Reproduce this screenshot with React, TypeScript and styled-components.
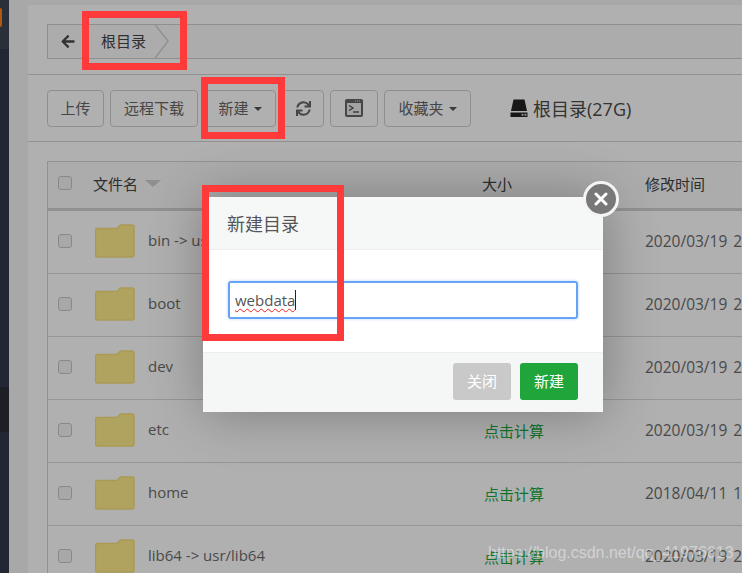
import styled, { createGlobalStyle } from "styled-components";
import { FaArrowLeft, FaSync } from "react-icons/fa";

const GlobalStyle = createGlobalStyle`
  html, body {
    margin: 0;
    height: 100%;
    overflow: hidden;
    background: #f3f3f3;
  }
  body {
    font-family: "Open Sans", "Noto Sans CJK SC", sans-serif;
    font-size: 15px;
  }
`;

const Shell = styled.div`
  position: relative;
  display: flex;
  width: 742px;
  height: 573px;
  overflow: hidden;
`;

const Sidebar = styled.div`
  display: flex;
  flex-direction: column;
  width: 9px;
  flex-shrink: 0;
  background: #33394a;
`;

const SidebarTop = styled.div`
  height: 49px;
  padding-top: 8px;
  box-sizing: border-box;
  background: #3d4553;
`;

const Logo = styled.div`
  width: 2px;
  height: 19px;
  background: #ff8217;
  border-radius: 0 3px 3px 0;
`;

const SidebarActive = styled.div`
  height: 45px;
  margin-top: 338px;
  background: #2a2e36;
`;

const Gutter = styled.div`
  width: 19px;
  flex-shrink: 0;
`;

const Panel = styled.div`
  flex: 1;
  min-width: 0;
  margin-top: 5px;
  background: #fff;
  overflow: hidden;
`;

const CrumbSection = styled.div`
  padding: 19px 0 15px 19px;
  border-bottom: 1px solid #d3d3d3;
`;

const CrumbBar = styled.div`
  display: flex;
  align-items: center;
  height: 35px;
  box-sizing: border-box;
  border: 1px solid #d0d0d0;
  border-right: 0;
  background: #fafafa;
`;

const BackArrow = styled(FaArrowLeft)`
  width: 16px;
  height: 15px;
  margin-left: 12px;
  color: #484848;
`;

const Crumb = styled.span`
  margin-left: 25px;
  padding-bottom: 3px;
  font-size: 15px;
  color: #444;
`;

const CrumbTip = styled.svg`
  width: 15px;
  height: 35px;
  margin-left: 8px;
  fill: none;
  stroke: #cfcfd6;
  stroke-width: 1.4;
`;

const Toolbar = styled.div`
  display: flex;
  align-items: center;
  gap: 6px;
  padding: 15px 0 14px 19px;
  border-bottom: 1px solid #d3d3d3;
`;

const ToolButton = styled.div<{ $width: number }>`
  display: flex;
  align-items: center;
  justify-content: center;
  width: ${(p) => p.$width}px;
  height: 37px;
  box-sizing: border-box;
  padding-bottom: 2px;
  border: 1px solid #d0d0d0;
  border-radius: 4px;
  background: #fff;
  color: #666;
  font-size: 15px;
  white-space: nowrap;
`;

const Caret = styled.span`
  width: 0;
  height: 0;
  margin: 2px 0 0 5px;
  border-left: 4.5px solid transparent;
  border-right: 4.5px solid transparent;
  border-top: 4.5px solid #555;
`;

const SyncIcon = styled(FaSync)`
  width: 15px;
  height: 15px;
  margin-top: 2px;
  color: #666;
`;

const ToolIcon = styled.svg`
  display: block;
  width: 18px;
  height: 18px;
`;

const DriveLabel = styled.div`
  display: flex;
  align-items: center;
  gap: 5px;
  margin: 0 0 1px 33px;
  font-size: 18px;
  color: #4a4a4a;
  white-space: nowrap;
`;

const FileTable = styled.div`
  width: 760px;
  margin: 19px 0 0 19px;
  border: 1px solid #d3d3d3;
  border-right: 0;
  box-sizing: border-box;
  border-bottom: 0;
`;

const Row = styled.div<{ $head?: boolean }>`
  display: grid;
  grid-template-columns: 45px 389px 163px 1fr;
  align-items: center;
  box-sizing: border-box;
  height: ${(p) => (p.$head ? "49px" : "63px")};
  padding-bottom: ${(p) => (p.$head ? "4px" : "2px")};
  background: ${(p) => (p.$head ? "#f9f9f9" : "#fff")};
  border-bottom: ${(p) => (p.$head ? "3px solid #d3d3d3" : "1px solid #d9d9d9")};
  color: ${(p) => (p.$head ? "#444" : "#6c6c6c")};
  white-space: nowrap;
`;

const CheckBox = styled.span`
  display: block;
  width: 14px;
  height: 14px;
  margin-left: 10px;
  box-sizing: border-box;
  border: 1.5px solid #c6c6c6;
  border-radius: 3px;
  background: #f4f4f4;
`;

const HeadName = styled.div`
  display: flex;
  align-items: center;
  gap: 7px;
`;

const SortArrow = styled.span`
  width: 0;
  height: 0;
  border-left: 8px solid transparent;
  border-right: 8px solid transparent;
  border-top: 7px solid #cfcfcf;
`;

const NameCell = styled.div`
  display: flex;
  align-items: center;
  gap: 13px;
  padding-left: 2px;
  margin-top: -1px;
  font-size: 15px;
`;

const FileName = styled.span`
  padding-bottom: 2px;
`;

const FolderIcon = styled.svg`
  display: block;
  flex-shrink: 0;
  width: 40px;
  height: 34px;
  fill: #ffec8c;
  stroke: #f6e07a;
  stroke-width: 1.5;
`;

const SizeLink = styled.div`
  padding-left: 2px;
  color: #1aa83f;
`;

const TimeCell = styled.div`
  font-size: 15.5px;
  word-spacing: 2px;
`;

const Overlay = styled.div`
  position: absolute;
  inset: 0;
  background: rgba(0, 0, 0, 0.31);
`;

const Modal = styled.div`
  position: absolute;
  left: 203px;
  top: 197px;
  width: 400px;
  background: #fff;
  box-shadow: 1px 1px 50px rgba(0, 0, 0, 0.3);
`;

const ModalHeader = styled.div`
  height: 53px;
  box-sizing: border-box;
  padding: 14px 24px 0;
  background: #f6f7f7;
  border-bottom: 1px solid #eee;
  font-size: 18px;
  line-height: 26px;
  color: #555;
`;

const ModalBody = styled.div`
  padding: 31px 25px 33px;
`;

const TextBox = styled.div`
  display: flex;
  align-items: center;
  height: 38px;
  box-sizing: border-box;
  padding: 0 5px;
  border: 2px solid #66a3f5;
  border-radius: 3px;
  box-shadow: 0 0 3px rgba(102, 163, 245, 0.5);
  font-size: 15px;
  color: #555;
`;

const Typed = styled.span`
  text-decoration: underline wavy #ee2222 1px;
  text-underline-offset: 2px;
`;

const TextCaret = styled.span`
  width: 1px;
  height: 20px;
  background: #222;
`;

const ModalFooter = styled.div`
  display: flex;
  justify-content: flex-end;
  gap: 9px;
  height: 60px;
  box-sizing: border-box;
  padding: 10px 25px 0;
  background: #f5f7f7;
  border-top: 1px solid #eee;
`;

const ModalButton = styled.div<{ $primary?: boolean }>`
  display: flex;
  align-items: center;
  justify-content: center;
  width: 58px;
  height: 37px;
  box-sizing: border-box;
  padding-bottom: 2px;
  border-radius: 3px;
  background: ${(p) => (p.$primary ? "#20a53a" : "#c9c9c9")};
  color: #fff;
  font-size: 15px;
`;

const CloseButton = styled.div`
  position: absolute;
  right: -16px;
  top: -16px;
  display: flex;
  align-items: center;
  justify-content: center;
  width: 36px;
  height: 36px;
  box-sizing: border-box;
  border: 3px solid #f4f4f4;
  border-radius: 50%;
  background: #787878;
`;

const CloseIcon = styled.svg`
  width: 14px;
  height: 14px;
  stroke: #fff;
  stroke-width: 3;
  stroke-linecap: round;
`;

const Annotation = styled.div<{ $x: number; $y: number; $w: number; $h: number }>`
  position: absolute;
  left: ${(p) => p.$x}px;
  top: ${(p) => p.$y}px;
  width: ${(p) => p.$w}px;
  height: ${(p) => p.$h}px;
  box-sizing: border-box;
  border: 7px solid #ff3a3a;
`;

const Watermark = styled.div`
  position: absolute;
  left: 488px;
  top: 544px;
  font-family: "Liberation Sans", sans-serif;
  font-size: 16px;
  color: rgba(255, 255, 255, 0.45);
  white-space: nowrap;
`;

const files = [
  { name: "bin -> usr/bin", size: "", time: "2020/03/19 21:08" },
  { name: "boot", size: "", time: "2020/03/19 21:08" },
  { name: "dev", size: "", time: "2020/03/19 21:08" },
  { name: "etc", size: "点击计算", time: "2020/03/19 21:08" },
  { name: "home", size: "点击计算", time: "2018/04/11 17:30" },
  { name: "lib64 -> usr/lib64", size: "点击计算", time: "2020/03/19 21:08" },
];

export default function App() {
  return (
    <Shell>
      <GlobalStyle />
      <Sidebar>
        <SidebarTop>
          <Logo />
        </SidebarTop>
        <SidebarActive />
      </Sidebar>
      <Gutter />
      <Panel>
        <CrumbSection>
          <CrumbBar>
            <BackArrow />
            <Crumb>根目录</Crumb>
            <CrumbTip viewBox="0 0 15 35">
              <path d="M0.5 0 L14 17 L0.5 35" />
            </CrumbTip>
          </CrumbBar>
        </CrumbSection>
        <Toolbar>
          <ToolButton $width={57}>上传</ToolButton>
          <ToolButton $width={88}>远程下载</ToolButton>
          <ToolButton $width={72}>
            新建
            <Caret />
          </ToolButton>
          <ToolButton $width={42}>
            <SyncIcon />
          </ToolButton>
          <ToolButton $width={48}>
            <ToolIcon viewBox="0 0 18 18">
              <rect x="0" y="0" width="18" height="18" rx="2" fill="#666" />
              <rect x="2" y="4" width="14" height="12" fill="#ededed" />
              <path d="M12 2 H13 M14 2 H15 M10 2 H11" stroke="#ddd" strokeWidth="1" />
              <path d="M4 6.5 L8 9 L4 11.5" fill="none" stroke="#555" strokeWidth="1.4" />
              <path d="M8 13 H14" stroke="#555" strokeWidth="1.4" />
            </ToolIcon>
          </ToolButton>
          <ToolButton $width={87}>
            收藏夹
            <Caret />
          </ToolButton>
          <DriveLabel>
            <ToolIcon viewBox="0 0 18 18">
              <path d="M3.5 0.5 H14.5 L17 12 H1 Z" fill="#222" />
              <path d="M0.5 13.5 H17.5 V18 H0.5 Z" fill="#222" />
              <rect x="11.5" y="14.8" width="2" height="2" fill="#ccc" />
              <rect x="14.5" y="14.8" width="2" height="2" fill="#ccc" />
            </ToolIcon>
            根目录(27G)
          </DriveLabel>
        </Toolbar>
        <FileTable>
          <Row $head>
            <CheckBox />
            <HeadName>
              文件名
              <SortArrow />
            </HeadName>
            <div>大小</div>
            <div>修改时间</div>
          </Row>
          {files.map((file) => (
            <Row key={file.name}>
              <CheckBox />
              <NameCell>
                <FolderIcon viewBox="0 0 40 34">
                  <path d="M2.5 4.5 H22 L25.5 1 H37 A2 2 0 0 1 39 3 V31 A2 2 0 0 1 37 33 H2.5 A2 2 0 0 1 0.5 31 V6.5 A2 2 0 0 1 2.5 4.5 Z" />
                </FolderIcon>
                <FileName>{file.name}</FileName>
              </NameCell>
              <SizeLink>{file.size}</SizeLink>
              <TimeCell>{file.time}</TimeCell>
            </Row>
          ))}
        </FileTable>
      </Panel>
      <Overlay />
      <Modal>
        <ModalHeader>新建目录</ModalHeader>
        <ModalBody>
          <TextBox>
            <Typed>webdata</Typed>
            <TextCaret />
          </TextBox>
        </ModalBody>
        <ModalFooter>
          <ModalButton>关闭</ModalButton>
          <ModalButton $primary>新建</ModalButton>
        </ModalFooter>
        <CloseButton>
          <CloseIcon viewBox="0 0 14 14">
            <path d="M2 2 L12 12 M12 2 L2 12" />
          </CloseIcon>
        </CloseButton>
      </Modal>
      <Annotation $x={82} $y={11} $w={105} $h={59} />
      <Annotation $x={201} $y={77} $w={84} $h={62} />
      <Annotation $x={202} $y={185} $w={142} $h={156} />
      <Watermark>https://blog.csdn.net/qq_41976613</Watermark>
    </Shell>
  );
}
